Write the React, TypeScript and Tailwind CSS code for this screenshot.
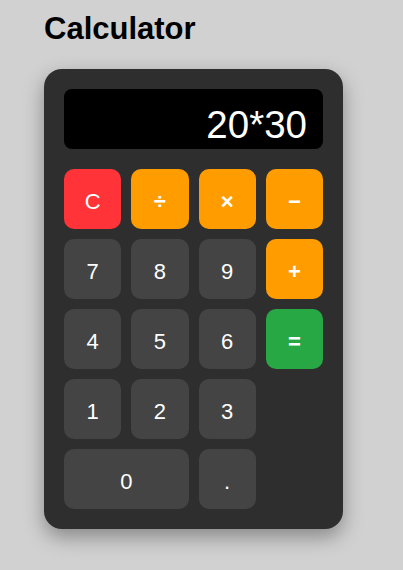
import React from "react";

type Btn = { label: string; kind: "num" | "op" | "clear" | "eq"; span?: boolean } | null;

const rows: Btn[] = [
  { label: "C", kind: "clear" },
  { label: "÷", kind: "op" },
  { label: "×", kind: "op" },
  { label: "−", kind: "op" },
  { label: "7", kind: "num" },
  { label: "8", kind: "num" },
  { label: "9", kind: "num" },
  { label: "+", kind: "op" },
  { label: "4", kind: "num" },
  { label: "5", kind: "num" },
  { label: "6", kind: "num" },
  { label: "=", kind: "eq" },
  { label: "1", kind: "num" },
  { label: "2", kind: "num" },
  { label: "3", kind: "num" },
  null,
  { label: "0", kind: "num", span: true },
  { label: ".", kind: "num" },
  null,
];

const kindClass: Record<string, string> = {
  num: "bg-[#444444] font-normal",
  op: "bg-[#ff9d00] font-bold",
  clear: "bg-[#ff3338] font-normal",
  eq: "bg-[#28a745] font-bold",
};

export default function App() {
  return (
    <div
      className="min-h-screen w-full bg-[#d1d1d1] pl-[44px] pt-[11px]"
      style={{ fontFamily: '"Liberation Sans", Arial, sans-serif' }}
    >
      <h1 className="text-[31px] leading-[36px] font-bold text-black mb-[22px]">Calculator</h1>
      <div className="w-[299px] rounded-[18px] bg-[#2e2e2e] p-[20px] shadow-[0_8px_20px_rgba(0,0,0,0.35)]">
        <div className="h-[60px] rounded-[8px] bg-black pt-[14px] pr-[16px] text-right text-[38.5px] leading-[44px] text-white">
          20*30
        </div>
        <div className="mt-[20px] grid grid-cols-4 gap-[10px]">
          {rows.map((b, i) =>
            b === null ? (
              <div key={i} className="h-[60px]" />
            ) : (
              <button
                key={i}
                className={`h-[60px] rounded-[10px] pt-[5px] text-center text-[22px] leading-[25px] text-white ${kindClass[b.kind]} ${b.span ? "col-span-2" : ""}`}
              >
                {b.label}
              </button>
            )
          )}
        </div>
      </div>
    </div>
  );
}
